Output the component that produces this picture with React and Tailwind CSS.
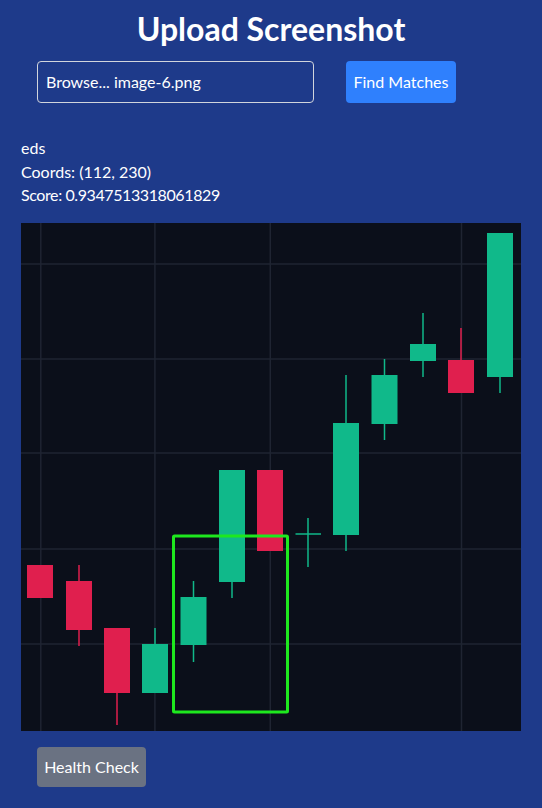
import React from "react";

const grid = {
  xs: [19.8, 133.9, 249.3, 440.5],
  ys: [41, 136, 230, 326, 421],
};

const GREEN = "#10b98a";
const RED = "#e01f4e";

// x = left edge of body, body is 26 wide
const candles = [
  { x: 6, top: 342, bottom: 375, up: false },
  { x: 45, top: 358, bottom: 407, wick: [342, 423], up: false },
  { x: 83, top: 405, bottom: 470, wick: [405, 502], up: false },
  { x: 121, top: 421, bottom: 470, wick: [405, 470], up: true },
  { x: 159.5, top: 374, bottom: 422, wick: [358, 439], up: true },
  { x: 198, top: 247, bottom: 359, wick: [247, 375], up: true },
  { x: 236, top: 247, bottom: 328, up: false },
  { x: 312, top: 200, bottom: 312, wick: [152, 328], up: true },
  { x: 350.5, top: 152, bottom: 201, wick: [136, 217], up: true },
  { x: 389, top: 121, bottom: 138, wick: [90, 154], up: true },
  { x: 427, top: 137, bottom: 170, wick: [105, 170], up: false },
  { x: 466, top: 10, bottom: 154, wick: [10, 170], up: true },
];

function Chart() {
  return (
    <svg viewBox="0 0 500 508" width="500" height="508" className="block">
      <rect width="500" height="508" fill="#0b0f1a" />
      {grid.xs.map((x) => (
        <line key={`v${x}`} x1={x} x2={x} y1="0" y2="508" stroke="#1f2432" strokeWidth="1.5" />
      ))}
      {grid.ys.map((y) => (
        <line key={`h${y}`} x1="0" x2="500" y1={y} y2={y} stroke="#1f2432" strokeWidth="1.5" />
      ))}
      {candles.map((c, i) => {
        const color = c.up ? GREEN : RED;
        return (
          <g key={i}>
            {c.wick && (
              <line
                x1={c.x + 13}
                x2={c.x + 13}
                y1={c.wick[0]}
                y2={c.wick[1]}
                stroke={color}
                strokeWidth="1.5"
              />
            )}
            <rect x={c.x} y={c.top} width="26" height={c.bottom - c.top} fill={color} />
          </g>
        );
      })}
      {/* doji */}
      <line x1="274.5" x2="300" y1="311" y2="311" stroke={GREEN} strokeWidth="1.5" />
      <line x1="287" x2="287" y1="295" y2="344" stroke={GREEN} strokeWidth="1.5" />
      {/* match box */}
      <rect
        x="152.5"
        y="313"
        width="114"
        height="176"
        fill="none"
        stroke="#1ee81e"
        strokeWidth="3"
        rx="1"
      />
    </svg>
  );
}

export default function App() {
  return (
    <div
      className="min-h-screen bg-[#1e3a8a] px-[21px] pt-[9px] pb-6 text-white"
      style={{ fontFamily: "Lato, 'Noto Sans', sans-serif" }}
    >
      <h1 className="text-center text-[32px] font-bold leading-[40px]">Upload Screenshot</h1>

      <div className="mt-[12px] ml-4 flex gap-8">
        <div className="flex h-[42px] w-[277px] items-center rounded-[4px] border border-gray-300 px-[8px] text-base">
          Browse... image-6.png
        </div>
        <button className="h-[42px] w-[110px] rounded-[4px] bg-[#2f80fd] text-base text-white">
          Find Matches
        </button>
      </div>

      <div className="mt-[33px] text-base leading-[23.5px]">
        <p>eds</p>
        <p>Coords: (112, 230)</p>
        <p className="tracking-[-0.4px]">Score: 0.9347513318061829</p>
      </div>

      <div className="mt-[16px]">
        <Chart />
      </div>

      <button className="mt-[16px] ml-4 h-[40px] w-[109px] rounded-[4px] bg-gray-500 text-base text-white">
        Health Check
      </button>
    </div>
  );
}
